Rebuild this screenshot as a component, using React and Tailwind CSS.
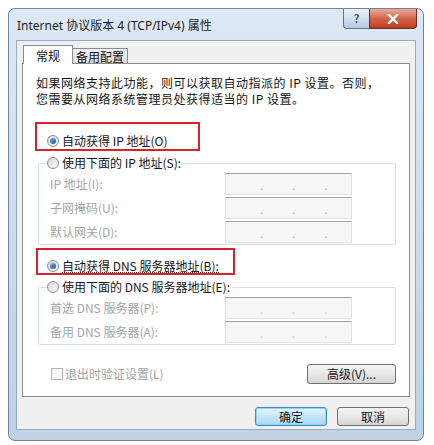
import React from "react";

function Radio({ checked, children, className = "", disabled = false, focus = false }) {
  return (
    <div className={"flex items-center h-[16px] " + className}>
      <span className="w-[12px] h-[12px] rounded-full border border-[#8e8f8f] bg-gradient-to-br from-[#d6d6d6] to-[#fbfbfb] flex items-center justify-center mr-[3px] shrink-0">
        {checked && (
          <span className="w-[6px] h-[6px] rounded-full bg-gradient-to-br from-[#7fb3e3] to-[#1b4e8f]" />
        )}
      </span>
      <span
        className={
          (disabled ? "text-[#a3a3a3] " : "text-[#161616] ") +
          (focus ? "border-b border-dotted border-[#333] leading-[13px] " : "leading-[16px] ")
        }
      >
        {children}
      </span>
    </div>
  );
}

function IpField({ faint = false }) {
  return (
    <div className="w-[127px] h-[22px] bg-[#f6f6f6] border border-[#e3e3e3] border-t-[#a3a3a3] flex items-end pb-[3px] pl-[34px] gap-[29px] text-[11px] leading-none">
      <span className={faint ? "text-[#d0d0d0]" : "text-[#b3b3b3]"}>.</span>
      <span className={faint ? "text-[#c8c8c8]" : "text-[#b3b3b3]"}>.</span>
      <span className={faint ? "text-[#d0d0d0]" : "text-[#b3b3b3]"}>.</span>
    </div>
  );
}

function Row({ label, faint }) {
  return (
    <div className="flex items-center h-[22px]">
      <span className="w-[186px] pl-[11px] text-[#a5a5a5]">{label}</span>
      <IpField faint={faint} />
    </div>
  );
}

export default function App() {
  return (
    <div className="w-[434px] h-[445px] bg-white pt-[8px] pl-[8px] font-['Noto_Sans_CJK_SC','Noto_Sans',sans-serif] text-[12px]">
      <div className="w-[416px] h-[433px] rounded-[7px] border border-[#6f839c] bg-gradient-to-b from-[#dde9f5] via-[#cddcec] to-[#bfd1e4] px-[7px] flex flex-col">
        {/* title bar */}
        <div className="h-[31px] flex justify-between shrink-0">
          <div className="self-center pl-[1px] pt-[2px] text-[12px] text-[#1c1c1c] font-['Noto_Sans','Noto_Sans_CJK_SC',sans-serif]">
            Internet 协议版本 4 (TCP/IPv4) 属性
          </div>
          <div className="flex -mr-[1px] h-[20px]">
            <div className="w-[26px] h-[20px] rounded-bl-[4px] border border-t-0 border-r-0 border-[#62758d] bg-gradient-to-b from-[#e9f0f8] via-[#d3e0ed] to-[#b6c9dd] flex items-center justify-center text-[11px] font-bold text-[#4a5a6c] leading-none">
              ?
            </div>
            <div className="w-[48px] h-[20px] rounded-br-[4px] border border-t-0 border-[#6b2e25] bg-gradient-to-b from-[#e9ab9a] via-[#d4654c] to-[#c03a22] flex items-center justify-center">
              <svg width="12" height="10" viewBox="0 0 12 10">
                <path d="M2 1 L10 9 M10 1 L2 9" stroke="#ffffff" strokeWidth="2.4" strokeLinecap="square" />
              </svg>
            </div>
          </div>
        </div>

        {/* inner content */}
        <div className="h-[390px] border border-[#98abc0] bg-[#f0f0f0] px-[5px] flex flex-col shrink-0">
          {/* tabs */}
          <div className="flex items-end pt-[4px] -mb-[1px] relative z-10">
            <div className="ml-[1px] w-[50px] h-[19px] border border-b-0 border-[#898c95] bg-white flex justify-center pt-[2px] text-[#141414] leading-[16px]">
              常规
            </div>
            <div className="w-[55px] h-[15px] mb-[1px] border border-l-0 border-b-0 border-[#898c95] bg-gradient-to-b from-[#f4f4f4] to-[#dcdcdc] flex justify-center text-[#141414] leading-[15px]">
              备用配置
            </div>
          </div>

          {/* panel */}
          <div className="relative h-[334px] border border-[#898c95] bg-white flex flex-col shrink-0">
            <p className="mt-[11px] pl-[13px] leading-[16px] tracking-[0.5px] text-[#161616]">
              如果网络支持此功能，则可以获取自动指派的 IP 设置。否则，
              <br />
              您需要从网络系统管理员处获得适当的 IP 设置。
            </p>

            <Radio checked className="mt-[26px] ml-[24px]">自动获得 IP 地址(O)</Radio>

            <fieldset className="mt-[6px] ml-[15px] w-[358px] border border-[#d5dfe5] rounded-[2px] pt-[2px] pb-[1px] flex flex-col gap-[2px]">
              <legend className="ml-[8px] p-0 pr-[2px]">
                <Radio>使用下面的 IP 地址(S):</Radio>
              </legend>
              <Row label="IP 地址(I):" />
              <Row label="子网掩码(U):" />
              <Row label="默认网关(D):" />
            </fieldset>

            <Radio checked focus className="mt-[13px] ml-[24px]">自动获得 DNS 服务器地址(B):</Radio>

            <fieldset className="mt-[5px] ml-[15px] w-[358px] border border-[#d5dfe5] rounded-[2px] pt-[2px] pb-[1px] flex flex-col gap-[2px]">
              <legend className="ml-[8px] p-0 pr-[2px]">
                <Radio>使用下面的 DNS 服务器地址(E):</Radio>
              </legend>
              <Row label="首选 DNS 服务器(P):" faint />
              <Row label="备用 DNS 服务器(A):" faint />
            </fieldset>

            <div className="mt-[19px] flex items-center justify-between">
              <div className="ml-[28px] flex items-center">
                <span className="w-[12px] h-[12px] border border-[#b4b4b4] bg-[#f7f7f7] mr-[2px]" />
                <span className="text-[#a3a3a3]">退出时验证设置(L)</span>
              </div>
              <div className="mr-[13px] w-[89px] h-[20px] rounded-[3px] border border-[#707070] bg-gradient-to-b from-[#f3f3f3] via-[#e8e8e8] to-[#d4d4d4] flex items-center justify-center text-[#161616] leading-none">
                高级(V)...
              </div>
            </div>

            {/* annotation boxes */}
            <div className="absolute left-[12px] top-[58px] w-[165px] h-[29px] border-2 border-[#d7232b]" />
            <div className="absolute left-[13px] top-[184px] w-[199px] h-[27px] border-2 border-[#d7232b]" />
          </div>

          {/* dialog buttons */}
          <div className="mt-[10px] mr-[1px] flex justify-end gap-[10px]">
            <div className="w-[72px] h-[19px] rounded-[3px] border border-[#3c8ec4] bg-gradient-to-b from-[#e6f5fd] via-[#c6e6f8] to-[#a9d8f3] flex items-center justify-center text-[#161616] leading-none shadow-[inset_0_0_0_1px_#8fd3f5]">
              确定
            </div>
            <div className="w-[72px] h-[19px] rounded-[3px] border border-[#707070] bg-gradient-to-b from-[#f3f3f3] via-[#e8e8e8] to-[#d4d4d4] flex items-center justify-center text-[#161616] leading-none">
              取消
            </div>
          </div>
        </div>
      </div>
    </div>
  );
}
